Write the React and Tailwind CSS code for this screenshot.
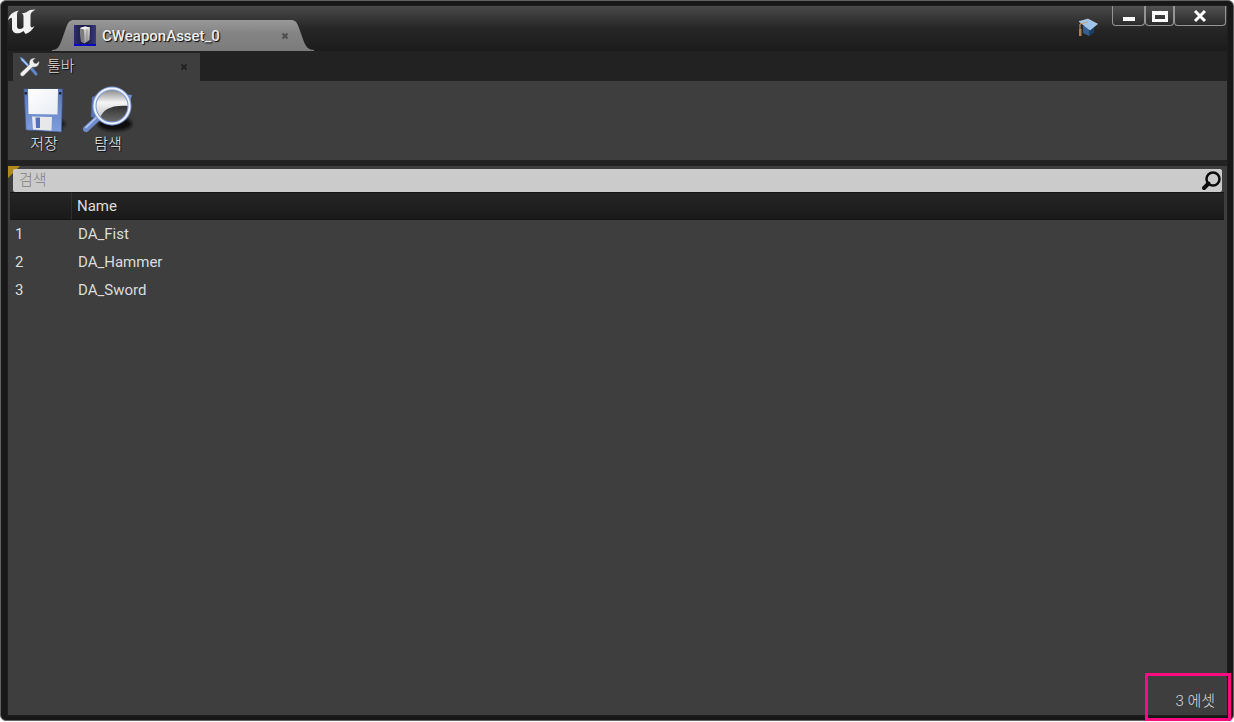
import React, { useState } from 'react';

const assets = [
    { id: 1, name: 'DA_Fist' },
    { id: 2, name: 'DA_Hammer' },
    { id: 3, name: 'DA_Sword' },
];

const UnrealLogo = () => (
    <svg width="28" height="30" viewBox="0 0 28 30" className="shrink-0" aria-hidden="true">
        <path
            d="M0 14.500 C0.800 9 5 5.500 11 4.500 C9 6 9 7 9 9 V20 C9 22 10 23 11.500 23 C13.500 23 15 22 15.500 21 V10.500 C15.500 8.500 14.500 7.500 13.500 7.500 C17 7 20 5.500 22 4 L27.500 3.500 C24 5.500 22.500 7 22.500 9.500 V19.500 C22.500 21.500 24 22 26.500 20 C24.500 24 21.500 26.500 17.500 28 L15.500 25 C13.500 26.800 11.500 27.300 9.500 27.300 C6 27.300 4 25 4 22 V13 C4 11 2 11.500 0 14.500 Z"
            fill="#f2f2f2"
        />
    </svg>
);

const AssetIcon = () => (
    <svg width="22" height="21" viewBox="0 0 22 21" className="shrink-0" aria-hidden="true">
        <defs>
            <linearGradient id="assetBg" x1="0" y1="0" x2="1" y2="0">
                <stop offset="0" stopColor="#2c2c72" />
                <stop offset="0.5" stopColor="#18183c" />
                <stop offset="1" stopColor="#38387c" />
            </linearGradient>
            <linearGradient id="assetFace" x1="0" y1="0" x2="0" y2="1">
                <stop offset="0" stopColor="#dcdcdc" />
                <stop offset="1" stopColor="#999" />
            </linearGradient>
        </defs>
        <rect width="22" height="21" fill="url(#assetBg)" />
        <path d="M6 3 L11 1.500 L16 2.500 L15.500 15 L10.500 18.500 L7 16.500 Z" fill="url(#assetFace)" />
        <path d="M6 3 L10 4.500 L10.500 18.500 L7 16.500 Z" fill="#7c7c7c" />
        <path d="M6 3 L11 1.500 L16 2.500 L10 4.500 Z" fill="#f1f1f1" />
        <path d="M13 4.500 L13 16" stroke="#858585" strokeWidth="0.8" />
        <rect y="19" width="22" height="2" fill="#0808c0" />
    </svg>
);

const ToolsIcon = () => (
    <svg width="22" height="22" viewBox="0 0 22 22" className="shrink-0" aria-hidden="true">
        <path d="M1 1 L4 2.500 L11 10 L9.500 11.500 L2.500 4.500 Z" fill="#9fc2f2" stroke="#4d79b8" strokeWidth="0.6" />
        <path d="M12 12 L17 18" stroke="#5c86c6" strokeWidth="3" strokeLinecap="round" />
        <path
            d="M1.500 17 L10.500 8.500 C9.500 5 12 1.500 16.500 2 L14 4.500 L15 7 L17.500 7.500 L20 5 C21 9 17.500 12 13.500 11 L4.500 20 C2.500 21 0.500 19 1.500 17 Z"
            fill="#f1f1f1"
            stroke="#555"
            strokeWidth="0.5"
        />
    </svg>
);

const GraduationIcon = () => (
    <svg width="20" height="20" viewBox="0 0 20 20" className="shrink-0" aria-hidden="true">
        <path d="M5 8 L16 7 L16 14 L11 18 L5 15 Z" fill="#35608f" />
        <path d="M11 12 L16 8 L16 14 L11 18 Z" fill="#1d4068" />
        <path d="M1 3.500 L10 1 L19.500 6 L12 12 Z" fill="#9fc4ea" stroke="#c6def5" strokeWidth="0.6" />
        <path d="M10 4 L2 6 L2 11" fill="none" stroke="#c9a472" strokeWidth="1" />
        <path d="M1 11 H3.500 V18 H1 Z" fill="#a98355" />
    </svg>
);

const SaveIcon = () => (
    <svg width="48" height="48" viewBox="0 0 48 48" aria-hidden="true">
        <defs>
            <linearGradient id="diskBody" x1="0" y1="0" x2="0" y2="1">
                <stop offset="0" stopColor="#5a76b4" />
                <stop offset="1" stopColor="#7f9ede" />
            </linearGradient>
            <linearGradient id="diskLabel" x1="0" y1="0" x2="1" y2="1">
                <stop offset="0" stopColor="#ffffff" />
                <stop offset="1" stopColor="#e8ecf3" />
            </linearGradient>
            <filter id="softShadow" x="-30%" y="-60%" width="160%" height="220%">
                <feGaussianBlur stdDeviation="1.500" />
            </filter>
        </defs>
        <path d="M10 41 L40 34 L46 38 L40 46 L14 45 Z" fill="#151515" filter="url(#softShadow)" />
        <path d="M4 4 H42.500 L41.500 47 L6 45 Z" fill="url(#diskBody)" stroke="#43598d" strokeWidth="0.7" />
        <path d="M8 4 H38 L37.500 29.500 L8.500 29 Z" fill="url(#diskLabel)" />
        <path d="M12 31.500 L32 32 L31.500 45.500 L13 44.500 Z" fill="#e6e8ea" />
        <path d="M15.500 32.500 H20 V43 H16 Z" fill="#5471b5" />
        <path d="M4.500 7 H7 V9.500 H4.500 Z M39 7 H41.500 V9.500 H39 Z" fill="#1c2740" />
    </svg>
);

const BrowseIcon = () => (
    <svg width="52" height="48" viewBox="0 0 52 48" aria-hidden="true">
        <defs>
            <linearGradient id="lens" x1="0" y1="0" x2="0" y2="1">
                <stop offset="0" stopColor="#808080" />
                <stop offset="0.4" stopColor="#f5f5f5" />
                <stop offset="1" stopColor="#b5b5b5" />
            </linearGradient>
            <linearGradient id="lensDark" x1="0" y1="0" x2="0" y2="1">
                <stop offset="0" stopColor="#333" />
                <stop offset="1" stopColor="#6d6d6d" />
            </linearGradient>
        </defs>
        <ellipse cx="33" cy="39" rx="17" ry="7" fill="#111" filter="url(#softShadow)" />
        <path d="M10 12 L22 7 L18 34 L9 32 Z" fill="#5874b1" />
        <path d="M40 9 L50 10 L47 20 Z" fill="#6f8cc9" />
        <path d="M4 44 L16 33" stroke="#6f8dcb" strokeWidth="6" strokeLinecap="round" />
        <path d="M4 42.500 L15 32" stroke="#b8cbf4" strokeWidth="1.500" strokeLinecap="round" />
        <circle cx="30" cy="21" r="17.500" fill="url(#lens)" />
        <path d="M18 33 C21 25 28 20 46 21 C46 30 39 38 30 38 C25 38 21 36 18 33 Z" fill="url(#lensDark)" />
        <circle cx="30" cy="21" r="17.500" fill="none" stroke="#7d97d0" strokeWidth="4" />
        <circle cx="30" cy="21" r="17.500" fill="none" stroke="#edf3ff" strokeWidth="2" />
    </svg>
);

const CloseMark = () => (
    <svg width="8" height="8" viewBox="0 0 8 8" aria-hidden="true">
        <path d="M1.500 1.500 L6.500 6.500 M6.500 1.500 L1.500 6.500" stroke="currentColor" strokeWidth="2" />
    </svg>
);

const WindowButton = ({ label, className, children }) => (
    <button
        type="button"
        aria-label={label}
        className={`flex h-5 items-center justify-center rounded-b-sm border border-t-0 border-[#949494] bg-linear-to-b from-[#525252] to-[#2b2b2b] ${className}`}
    >
        {children}
    </button>
);

const ToolButton = ({ label, className, children }) => (
    <button type="button" className={`flex flex-col items-center text-[#eee] ${className}`}>
        {children}
        <span className="mt-px text-[15px] leading-5 font-light [text-shadow:1px_1px_1px_#000]">{label}</span>
    </button>
);

const TitleBar = () => (
    <header className="flex h-[45px] justify-between bg-linear-to-b from-[#4a4a4a] via-[#262626] via-50% to-[#1b1b1b]">
        <div className="flex">
            <UnrealLogo />
            <div className="ml-4 flex h-[31px] self-end">
                <svg width="22" height="31" viewBox="0 0 22 31" aria-hidden="true">
                    <defs>
                        <linearGradient id="tabFill" x1="0" y1="0" x2="0" y2="1">
                            <stop offset="0" stopColor="#999" />
                            <stop offset="0.4" stopColor="#858585" />
                            <stop offset="1" stopColor="#7b7b7b" />
                        </linearGradient>
                    </defs>
                    <path d="M0 31 V30 C5 30 7 27 9 22 L14 8 C16 2 18 0 22 0 V31 Z" fill="url(#tabFill)" />
                </svg>
                <div className="flex w-[217px] items-center bg-linear-to-b from-[#999] via-[#858585] via-40% to-[#7b7b7b]">
                    <AssetIcon />
                    <span className="ml-1.5 flex-1 text-[15px] leading-5 font-medium text-[#eee] [text-shadow:1px_1px_1px_#000]">
                        CWeaponAsset_0
                    </span>
                    <button type="button" aria-label="탭 닫기" className="mr-0.5 text-[#4e4e4e]">
                        <CloseMark />
                    </button>
                </div>
                <svg width="23" height="31" viewBox="0 0 23 31" aria-hidden="true">
                    <path d="M0 0 C4 0 6 2 8 8 L13 22 C15 27 18 30 23 30 V31 H0 Z" fill="url(#tabFill)" />
                </svg>
            </div>
        </div>
        <div className="flex items-start">
            <button type="button" aria-label="튜토리얼" className="mt-3 mr-3.5">
                <GraduationIcon />
            </button>
            <WindowButton label="최소화" className="w-[33px]">
                <svg width="14" height="14" viewBox="0 0 14 14" aria-hidden="true">
                    <path d="M1 8 H13 V12 H1 Z" fill="#fff" />
                </svg>
            </WindowButton>
            <WindowButton label="최대화" className="w-[29px]">
                <svg width="16" height="14" viewBox="0 0 16 14" aria-hidden="true">
                    <path d="M0 2 H16 V13 H0 Z M3 6 V10 H13 V6 Z" fill="#fff" fillRule="evenodd" />
                </svg>
            </WindowButton>
            <WindowButton label="닫기" className="mr-px w-[52px]">
                <svg width="14" height="14" viewBox="0 0 14 14" aria-hidden="true">
                    <path d="M2 2 L12 12 M12 2 L2 12" stroke="#fff" strokeWidth="3" />
                </svg>
            </WindowButton>
        </div>
    </header>
);

const App = () => {
    const [search, setSearch] = useState('');
    const rows = assets.filter((asset) => asset.name.toLowerCase().includes(search.toLowerCase()));

    return (
        <div className="relative flex min-h-screen flex-col bg-white pb-px font-[Roboto,'Noto_Sans_CJK_KR',sans-serif] text-[#dcdcdc]">
            <div className="flex flex-1 flex-col rounded-md border border-[#626262] bg-[#181818] pt-1 pr-[5px] pb-1 pl-1.5">
                <div className="flex flex-1 flex-col border border-[#1e1e1e] bg-[#222]">
                    <TitleBar />

                    <div className="flex h-[30px] items-end pl-[5px]">
                        <div className="flex h-7 w-[187px] items-center bg-[#3e3e3e] pl-1.5">
                            <ToolsIcon />
                            <span className="ml-1.5 flex-1 pb-0.5 text-[15px] leading-5 font-light [text-shadow:1px_1px_1px_#000]">툴바</span>
                            <button type="button" aria-label="툴바 닫기" className="mr-3 text-[#222]">
                                <CloseMark />
                            </button>
                        </div>
                    </div>

                    <div className="flex h-[79px] items-start bg-[#3e3e3e] pt-1 pl-3">
                        <ToolButton label="저장" className="mr-3.5">
                            <SaveIcon />
                        </ToolButton>
                        <ToolButton label="탐색">
                            <BrowseIcon />
                        </ToolButton>
                    </div>

                    <main className="relative mt-1.5 flex flex-1 flex-col bg-[#3e3e3e] pt-[3px]">
                        <svg width="12" height="12" viewBox="0 0 12 12" className="absolute top-0 left-0" aria-hidden="true">
                            <path d="M0 0 H12 L0 12 Z" fill="#b08a1c" />
                        </svg>
                        <div className="relative mr-[5px] ml-[5px] flex h-[23px] items-center rounded-xs bg-[#cbcbcb]">
                            <input
                                type="text"
                                aria-label="검색"
                                placeholder="검색"
                                value={search}
                                onChange={(e) => setSearch(e.target.value)}
                                className="h-full min-w-0 flex-1 px-1.5 pb-0.5 text-[15px] leading-5 font-light text-[#222] outline-none placeholder:text-[#808080]"
                            />
                            <svg width="20" height="20" viewBox="0 0 20 20" className="mr-px shrink-0" aria-hidden="true">
                                <circle cx="12" cy="8" r="6.500" fill="none" stroke="#0b0b0b" strokeWidth="2.500" />
                                <path d="M7.500 12.500 L3 17" stroke="#0b0b0b" strokeWidth="4" strokeLinecap="round" />
                            </svg>
                        </div>

                        <div className="mr-[3px] ml-0.5">
                            <table className="w-full table-fixed border-separate border-spacing-0 text-left text-[15px] leading-5">
                                <thead>
                                    <tr className="h-7 bg-linear-to-b from-[#262626] to-[#191919]">
                                        <th aria-label="번호" className="w-[62px] border-y border-r border-[#141414] border-r-[#303030]" />
                                        <th className="border-y border-[#141414] px-[5px] font-normal">Name</th>
                                    </tr>
                                </thead>
                                <tbody>
                                    {rows.map((asset) => (
                                        <tr key={asset.id} className="h-7">
                                            <td className="px-[5px]">{asset.id}</td>
                                            <td className="px-1.5">{asset.name}</td>
                                        </tr>
                                    ))}
                                </tbody>
                            </table>
                        </div>

                        <p className="mt-auto mr-3 pb-1 text-right text-[15px] leading-5 font-light">{rows.length} 에셋</p>
                    </main>
                </div>
            </div>
            <div className="pointer-events-none absolute right-[3px] bottom-px h-12 w-[86px] border-3 border-[#ff0a83]" />
        </div>
    );
};

export default App;
